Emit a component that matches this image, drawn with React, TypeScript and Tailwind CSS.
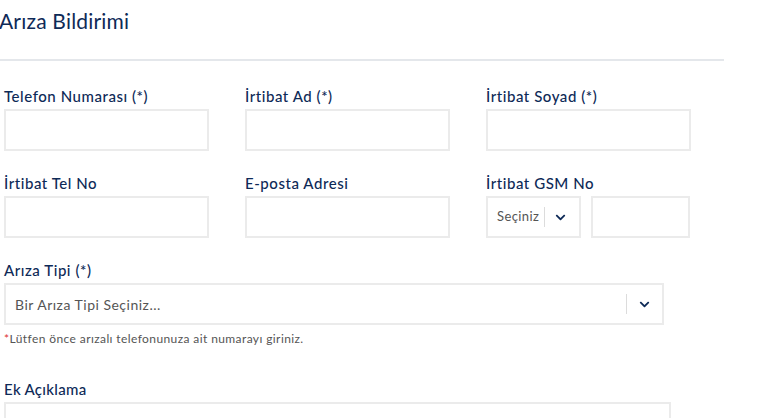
import { FaChevronDown } from "react-icons/fa";

function Field({ label }: { label: string }) {
  return (
    <div>
      <label className="block h-5 leading-5 text-[15px] font-medium tracking-[0.55px] text-[#0e2a57]">{label}</label>
      <input className="mt-[3px] w-[205px] h-[42px] border-2 border-[#ebebeb] outline-none" />
    </div>
  );
}

export default function App() {
  return (
    <div className="w-[781px] h-[418px] overflow-hidden bg-white font-['Lato',sans-serif] text-[#0e2a57]">
      {/* Heading */}
      <div className="w-[724px] h-[61px] border-b-2 border-[#e4e7eb] pt-[7px]">
        <h1 className="text-[21px] leading-7 font-normal tracking-[0.2px] -ml-[1px]">Arıza Bildirimi</h1>
      </div>

      <div className="pl-1">
        {/* Row 1 */}
        <div className="mt-[25px] grid grid-cols-[205px_205px_205px] gap-x-9">
          <Field label="Telefon Numarası (*)" />
          <Field label="İrtibat Ad (*)" />
          <Field label="İrtibat Soyad (*)" />
        </div>

        {/* Row 2 */}
        <div className="mt-[22px] grid grid-cols-[205px_205px_205px] gap-x-9">
          <Field label="İrtibat Tel No" />
          <Field label="E-posta Adresi" />
          <div>
            <label className="block h-5 leading-5 text-[15px] font-medium tracking-[0.55px]">İrtibat GSM No</label>
            <div className="mt-[3px] flex gap-[10px]">
              <div className="w-[95px] h-[42px] border-2 border-[#ebebeb] flex items-center">
                <span className="pl-[9px] text-[13px] tracking-[0.4px] text-[#555]">Seçiniz</span>
                <span className="ml-[5px] w-px h-[20px] bg-[#dcdcdc]" />
                <FaChevronDown className="ml-[10px] text-[11px] text-[#0e2a57]" />
              </div>
              <input className="w-[99px] h-[42px] border-2 border-[#ebebeb] outline-none" />
            </div>
          </div>
        </div>

        {/* Arıza Tipi */}
        <div className="mt-[22px]">
          <label className="block h-5 leading-5 text-[15px] font-medium tracking-[0.55px]">Arıza Tipi (*)</label>
          <div className="mt-[3px] w-[660px] h-[42px] border-2 border-[#ebebeb] flex items-center">
            <span className="flex-1 pl-[9px] text-[14px] tracking-[0.5px] text-[#555]">Bir Arıza Tipi Seçiniz...</span>
            <span className="w-px h-[20px] bg-[#dcdcdc]" />
            <FaChevronDown className="ml-[12px] mr-[12px] text-[11px] text-[#0e2a57]" />
          </div>
        </div>

        <p className="mt-[7px] h-[14px] leading-[14px] text-[12px] tracking-[0.4px] text-[#555]">
          <span className="text-[#d33]">*</span>Lütfen önce arızalı telefonunuza ait numarayı giriniz.
        </p>

        {/* Ek Açıklama */}
        <div className="mt-[33px]">
          <label className="block h-5 leading-5 text-[15px] font-medium tracking-[0.3px]">Ek Açıklama</label>
          <textarea className="mt-[3px] w-[667px] h-[80px] border-2 border-[#ebebeb] outline-none resize-none" />
        </div>
      </div>
    </div>
  );
}
